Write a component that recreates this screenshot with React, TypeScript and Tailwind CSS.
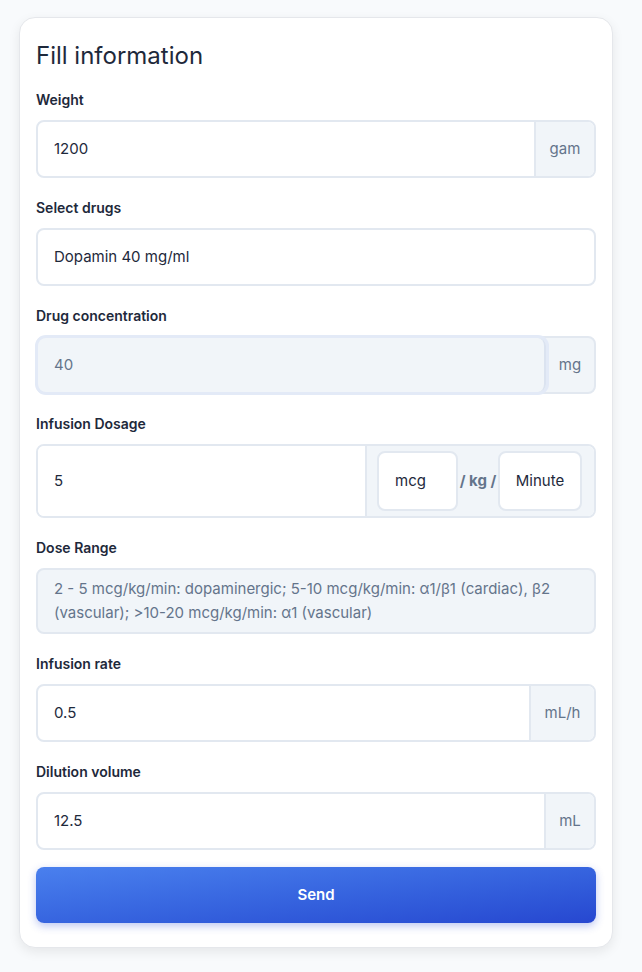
import React from "react";

const Label = ({ children }: { children: React.ReactNode }) => (
  <div className="text-[14px] leading-5 font-semibold text-[#1e293b] mb-[10px]">{children}</div>
);

const Field = ({ value, addon, addonW }: { value: string; addon?: string; addonW?: string }) => (
  <div className="flex h-[58px] border-2 border-[#e2e8f0] rounded-lg overflow-hidden bg-white">
    <div className="flex-1 flex items-center px-4 text-[15px] text-[#1e293b]">{value}</div>
    {addon && (
      <div className={`flex items-center justify-center border-l-2 border-[#e2e8f0] bg-[#f1f5f9] text-[15px] text-[#64748b] ${addonW}`}>{addon}</div>
    )}
  </div>
);

export default function App() {
  return (
    <div className="min-h-[972px] bg-[#f8fafc] pt-[17px] px-[19px]" style={{ fontFamily: "Inter, 'Noto Sans', sans-serif" }}>
      <div className="w-[594px] bg-white rounded-2xl border border-[#e5e7eb] shadow-[0_4px_12px_rgba(0,0,0,0.08)] px-4 pt-[22px] pb-6">
        <h1 className="text-[24px] leading-8 text-[#1e293b] mb-[18px]">Fill information</h1>
        <Label>Weight</Label>
        <Field value="1200" addon="gam" addonW="w-[60px]" />
        <div className="h-5" />
        <Label>Select drugs</Label>
        <Field value="Dopamin 40 mg/ml" />
        <div className="h-5" />
        <Label>Drug concentration</Label>
        <div className="flex h-[58px] border-2 border-[#e2e8f0] rounded-lg bg-[#f1f5f9]">
          <div className="flex-1 flex items-center px-4 text-[15px] text-[#64748b] rounded-lg shadow-[0_0_0_3px_#e3eaf7] border-r-2 border-[#dbe3f0]">40</div>
          <div className="w-[48px] flex items-center justify-center text-[15px] text-[#64748b]">mg</div>
        </div>
        <div className="h-5" />
        <Label>Infusion Dosage</Label>
        <div className="flex h-[74px] border-2 border-[#e2e8f0] rounded-lg overflow-hidden">
          <div className="w-[329px] flex items-center px-4 text-[15px] text-[#1e293b] bg-white border-r-2 border-[#e2e8f0]">5</div>
          <div className="flex-1 bg-[#f1f5f9] flex items-center pl-[10px] pr-[12px] gap-0">
            <div className="w-[81px] h-[60px] bg-white border-2 border-[#e2e8f0] rounded-lg flex items-center pl-[16px] text-[15px] text-[#1e293b]">mcg</div>
            <div className="w-[40px] text-center text-[15px] font-bold text-[#64748b]">/ kg /</div>
            <div className="flex-1 h-[60px] bg-white border-2 border-[#e2e8f0] rounded-lg flex items-center justify-center text-[15px] text-[#1e293b]">Minute</div>
          </div>
        </div>
        <div className="h-5" />
        <Label>Dose Range</Label>
        <div className="bg-[#f1f5f9] border-2 border-[#e2e8f0] rounded-lg px-4 py-[7px] text-[15px] leading-6 text-[#64748b]">
          2 - 5 mcg/kg/min: dopaminergic; 5-10 mcg/kg/min: α1/β1 (cardiac), β2 (vascular); &gt;10-20 mcg/kg/min: α1 (vascular)
        </div>
        <div className="h-5" />
        <Label>Infusion rate</Label>
        <Field value="0.5" addon="mL/h" addonW="w-[65px]" />
        <div className="h-5" />
        <Label>Dilution volume</Label>
        <Field value="12.5" addon="mL" addonW="w-[50px]" />
        <button className="mt-[17px] w-full h-[56px] rounded-lg text-white font-semibold text-[15px] bg-gradient-to-br from-[#4a80ee] to-[#2747d0] shadow-[0_3px_8px_rgba(37,70,208,0.3)]">Send</button>
      </div>
    </div>
  );
}
